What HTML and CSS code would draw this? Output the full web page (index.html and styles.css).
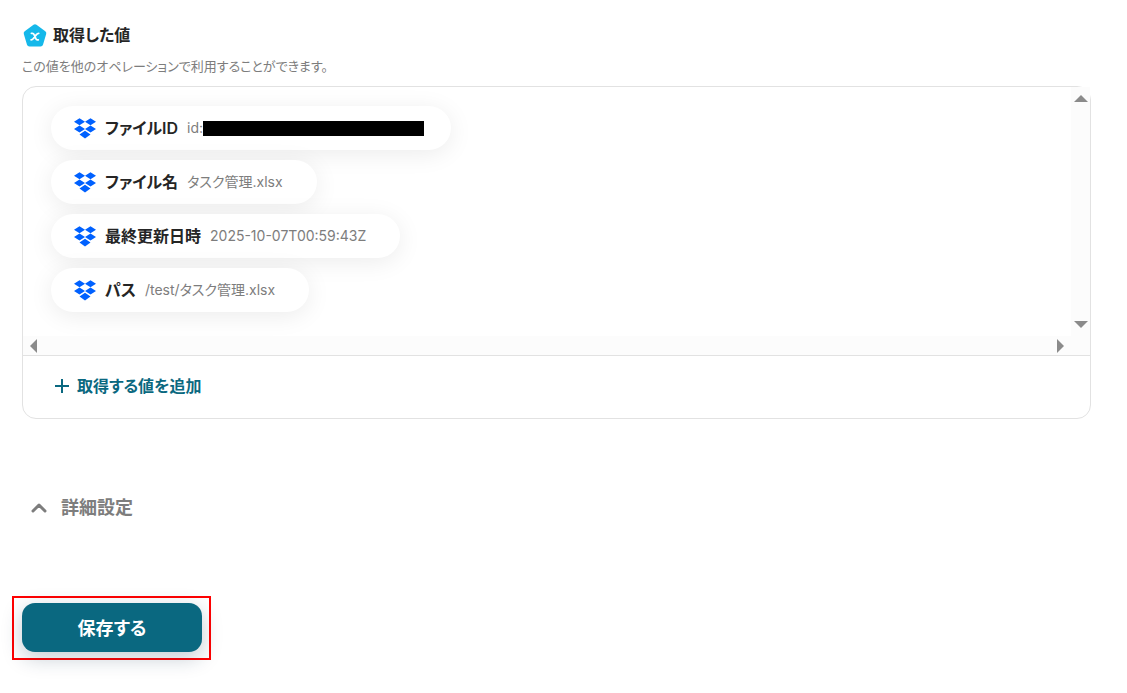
FILE: index.html
```
<!DOCTYPE html>
<html lang="ja">
<head>
  <meta charset="UTF-8" />
  <meta name="viewport" content="width=device-width, initial-scale=1.0" />
  <title>取得した値</title>
  <link rel="stylesheet" href="styles.css">
</head>
<body>
  <svg class="sprite" aria-hidden="true">
    <symbol id="dropbox" viewBox="0 0 22 21">
      <path d="M5.5 0.3 11 3.8 5.5 7.3 0 3.8zM16.5 0.3 22 3.8 16.5 7.3 11 3.8zM5.5 7.5 11 11 5.5 14.5 0 11zM16.5 7.5 22 11 16.5 14.5 11 11zM5.5 16.5 11 12.8 16.5 16.5 11 20.5z"/>
    </symbol>
  </svg>

  <main class="page">
    <section>
      <h2 class="title">
        <svg class="title-icon" viewBox="0 0 24 24" aria-hidden="true">
          <path d="M12 3.8 20.8 10.3 17.6 21H6.4L3.2 10.3z" fill="#15b8ea" stroke="#15b8ea" stroke-width="5" stroke-linejoin="round"/>
          <path d="M8.4 10.3h1c.9 0 1.3.4 1.7 1.4l1.6 3.7c.4 1 .8 1.4 1.7 1.4h.9M15.7 10.3c-1 0-1.6.4-2.3 1.3l-3 3.9c-.7.9-1.3 1.3-2.3 1.3" fill="none" stroke="#fff" stroke-width="1.8" stroke-linecap="round"/>
        </svg>
        取得した値
      </h2>
      <p class="note">この値を他のオペレーションで利用することができます。</p>

      <div class="panel">
        <div class="viewer">
          <ul class="values">
            <li class="chip">
              <svg class="chip-icon" aria-hidden="true"><use href="#dropbox"/></svg>
              <span class="chip-name">ファイルID</span>
              <span class="chip-value">id:</span><span class="mask"></span>
            </li>
            <li class="chip">
              <svg class="chip-icon" aria-hidden="true"><use href="#dropbox"/></svg>
              <span class="chip-name">ファイル名</span>
              <span class="chip-value">タスク管理.xlsx</span>
            </li>
            <li class="chip">
              <svg class="chip-icon" aria-hidden="true"><use href="#dropbox"/></svg>
              <span class="chip-name">最終更新日時</span>
              <span class="chip-value">2025-10-07T00:59:43Z</span>
            </li>
            <li class="chip">
              <svg class="chip-icon" aria-hidden="true"><use href="#dropbox"/></svg>
              <span class="chip-name">パス</span>
              <span class="chip-value">/test/タスク管理.xlsx</span>
            </li>
          </ul>
          <div class="track track-v">
            <i class="arrow up"></i>
            <i class="arrow down"></i>
          </div>
          <div class="track track-h">
            <i class="arrow left"></i>
            <i class="arrow right"></i>
          </div>
          <div class="track"></div>
        </div>
        <div class="panel-footer">
          <button type="button" class="add">
            <svg class="add-icon" viewBox="0 0 16 16" aria-hidden="true"><path d="M8 1v14M1 8h14"/></svg>
            取得する値を追加
          </button>
        </div>
      </div>
    </section>

    <button type="button" class="details">
      <svg class="details-icon" viewBox="0 0 18 18" aria-hidden="true"><path d="M3 12 9 6l6 6"/></svg>
      詳細設定
    </button>

    <div class="save-frame">
      <button type="button" class="save">保存する</button>
    </div>
  </main>
</body>
</html>
```

FILE: styles.css
```
* {
  box-sizing: border-box;
}
body {
  margin: 0;
  background: #fff;
  color: #252525;
  font-family: Inter, "Noto Sans CJK JP", sans-serif;
  font-feature-settings: "palt";
}
button {
  border: none;
  background: none;
  padding: 0;
  font-family: inherit;
  font-feature-settings: inherit;
  cursor: pointer;
}
.sprite {
  display: none;
}
.page {
  padding: 23px 36px 24px 22px;
}
.title {
  display: flex;
  align-items: center;
  gap: 6px;
  margin: 0;
  padding-left: 1px;
  font-size: 16px;
  line-height: 24px;
  font-weight: 600;
}
.title-icon {
  width: 24px;
  height: 24px;
}
.note {
  margin: 10px 0;
  font-size: 13px;
  line-height: 19px;
  color: #7d7d7d;
}

/* value list */
.panel {
  border: 1px solid #e2e2e2;
  border-radius: 14px;
}
.viewer {
  display: grid;
  grid-template-columns: 1fr 19px;
  grid-template-rows: auto 19px;
  border-bottom: 1px solid #e2e2e2;
}
.values {
  display: flex;
  flex-direction: column;
  align-items: flex-start;
  gap: 10px;
  margin: 0;
  padding: 19px 28px 24px;
  list-style: none;
  overflow: hidden;
  border-top-left-radius: 13px;
}
.chip {
  display: flex;
  align-items: center;
  height: 44px;
  padding: 0 34px 0 23px;
  border-radius: 22px;
  background: #fff;
  box-shadow: 0 4px 24px rgba(0, 0, 0, 0.08);
}
.chip-icon {
  width: 22px;
  height: 21px;
  margin-right: 9px;
  fill: #0061ff;
}
.chip-name,
.chip-value {
  padding-bottom: 2px;
}
.chip-name {
  margin-right: 9px;
  font-size: 16px;
  font-weight: 600;
}
.chip-value {
  font-size: 14px;
  color: #7d7d7d;
}
.mask {
  width: 221px;
  height: 15px;
  margin-right: -7px;
  background: #000;
}

/* scroll tracks */
.track {
  display: flex;
  justify-content: space-between;
  align-items: center;
  background: #fcfcfc;
}
.track-v {
  flex-direction: column;
  padding: 8px 0;
}
.track-h {
  padding: 0 7px;
}
.arrow {
  border: 7px solid transparent;
}
.up {
  border-top: none;
  border-bottom-color: #8b8b8b;
}
.down {
  border-bottom: none;
  border-top-color: #8b8b8b;
}
.left {
  border-left: none;
  border-right-color: #8b8b8b;
}
.right {
  border-right: none;
  border-left-color: #8b8b8b;
}

.panel-footer {
  padding: 17px 31px 19px;
}
.add {
  display: flex;
  align-items: center;
  gap: 7px;
  font-size: 16px;
  line-height: 26px;
  font-weight: 600;
  color: #0a6880;
}
.add-icon {
  width: 16px;
  height: 16px;
  fill: none;
  stroke: currentColor;
  stroke-width: 2;
}

.details {
  display: flex;
  align-items: center;
  gap: 13px;
  margin-top: 75px;
  padding-left: 8px;
  font-size: 18px;
  line-height: 28px;
  font-weight: 700;
  color: #7d7d7d;
}
.details-icon {
  width: 18px;
  height: 18px;
  fill: none;
  stroke: currentColor;
  stroke-width: 3;
  stroke-linecap: round;
  stroke-linejoin: round;
}

.save-frame {
  width: fit-content;
  margin: 74px 0 0 -10px;
  padding: 5px 7px 6px 8px;
  border: 2px solid #f00;
}
.save {
  display: block;
  width: 180px;
  height: 49px;
  padding-bottom: 2px;
  border-radius: 13px;
  background: #0a6880;
  color: #fff;
  font-size: 18px;
  font-weight: 700;
  box-shadow: 0 6px 20px rgba(20, 50, 80, 0.25);
}
```
